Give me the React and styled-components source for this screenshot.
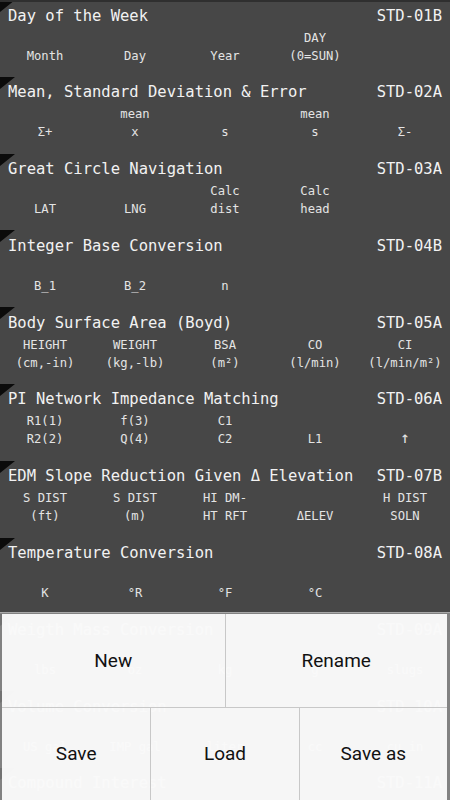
import React from 'react';
import styled, { createGlobalStyle } from 'styled-components';

const GlobalStyle = createGlobalStyle`
  html, body {
    margin: 0;
    padding: 0;
    background: #474747;
    overflow: hidden;
  }
`;

const Screen = styled.div`
  position: relative;
  width: 450px;
  height: 800px;
  overflow: hidden;
  background: #474747;
  border-top: 2px solid #2f2f2f;
  box-sizing: border-box;
  font-family: "DejaVu Sans Mono", "Liberation Mono", monospace;
`;

const List = styled.div`
  display: flex;
  flex-direction: column;
  margin-top: -2px;
`;

const Row = styled.div`
  position: relative;
  height: 76.8px;
  flex: none;
  padding-top: 5.5px;
  box-sizing: border-box;
`;

const Corner = styled.div`
  position: absolute;
  left: 0;
  top: 0;
  width: 0;
  height: 0;
  border-top: 12px solid #0b0b0b;
  border-right: 15px solid transparent;
`;

const Header = styled.div`
  display: flex;
  justify-content: space-between;
  padding: 0 8px;
  font-size: 15.5px;
  line-height: 20px;
  color: #f2f2f2;
  white-space: nowrap;
`;

const Fields = styled.div`
  display: grid;
  grid-template-columns: repeat(5, 90px);
  margin-top: 3px;
`;

const Field = styled.div`
  height: 36px;
  display: flex;
  flex-direction: column;
  justify-content: flex-end;
  align-items: center;
  font-size: 12.2px;
  line-height: 18px;
  color: #e4e4e4;
  white-space: nowrap;
`;

const Arrow = styled.span`
  font-size: 16px;
  line-height: 18px;
`;

const Menu = styled.div`
  position: absolute;
  left: 0;
  right: 0;
  bottom: 0;
  height: 188px;
  box-sizing: border-box;
  padding: 1px 3px 0 2px;
  background: rgba(150, 150, 150, 0.75);
  border-top: 1px solid #a8a8a8;
  display: flex;
  flex-direction: column;
`;

const MenuRow = styled.div`
  flex: 1;
  display: grid;
  grid-template-columns: repeat(${(p) => p.$cols}, 1fr);
  border-bottom: ${(p) => (p.$last ? 'none' : '1px solid #c8c8c8')};
`;

const MenuItem = styled.div`
  display: flex;
  align-items: center;
  justify-content: center;
  background: rgba(255, 255, 255, 0.93);
  border-left: ${(p) => (p.$first ? 'none' : '1px solid #c8c8c8')};
  font-family: Roboto, "Open Sans", sans-serif;
  font-size: 19px;
  color: #111;
`;

const rows = [
  { title: 'Day of the Week', code: 'STD-01B', cols: [['', 'Month'], ['', 'Day'], ['', 'Year'], ['DAY', '(0=SUN)'], ['', '']] },
  { title: 'Mean, Standard Deviation & Error', code: 'STD-02A', cols: [['', 'Σ+'], ['mean', 'x'], ['', 's'], ['mean', 's'], ['', 'Σ-']] },
  { title: 'Great Circle Navigation', code: 'STD-03A', cols: [['', 'LAT'], ['', 'LNG'], ['Calc', 'dist'], ['Calc', 'head'], ['', '']] },
  { title: 'Integer Base Conversion', code: 'STD-04B', cols: [['', 'B_1'], ['', 'B_2'], ['', 'n'], ['', ''], ['', '']] },
  { title: 'Body Surface Area (Boyd)', code: 'STD-05A', cols: [['HEIGHT', '(cm,-in)'], ['WEIGHT', '(kg,-lb)'], ['BSA', '(m²)'], ['CO', '(l/min)'], ['CI', '(l/min/m²)']] },
  { title: 'PI Network Impedance Matching', code: 'STD-06A', cols: [['R1(1)', 'R2(2)'], ['f(3)', 'Q(4)'], ['C1', 'C2'], ['', 'L1'], ['', <Arrow>↑</Arrow>]] },
  { title: 'EDM Slope Reduction Given Δ Elevation', code: 'STD-07B', cols: [['S DIST', '(ft)'], ['S DIST', '(m)'], ['HI DM-', 'HT RFT'], ['', 'ΔELEV'], ['H DIST', 'SOLN']] },
  { title: 'Temperature Conversion', code: 'STD-08A', cols: [['', 'K'], ['', '°R'], ['', '°F'], ['', '°C'], ['', '']] },
  { title: 'Weigth Mass Conversion', code: 'STD-09A', cols: [['', 'lbs'], ['', 'oz'], ['', 'kg'], ['', 'g'], ['', 'slugs']] },
  { title: 'Volume Conversion', code: 'STD-10A', cols: [['', 'US gal'], ['', 'IMP gal'], ['', 'liter'], ['', 'cc'], ['', 'cu in']] },
  { title: 'Compound Interest', code: 'STD-11A', cols: [] },
];

const App = () => {
  return (
    <Screen>
      <GlobalStyle />
      <List>
        {rows.map((row) => (
          <Row key={row.code}>
            <Corner />
            <Header>
              <span>{row.title}</span>
              <span>{row.code}</span>
            </Header>
            <Fields>
              {row.cols.map((c, i) => (
                <Field key={i}>
                  {c[0] && <div>{c[0]}</div>}
                  <div>{c[1] || '\u00a0'}</div>
                </Field>
              ))}
            </Fields>
          </Row>
        ))}
      </List>
      <Menu>
        <MenuRow $cols={2}>
          <MenuItem $first>New</MenuItem>
          <MenuItem>Rename</MenuItem>
        </MenuRow>
        <MenuRow $cols={3} $last>
          <MenuItem $first>Save</MenuItem>
          <MenuItem>Load</MenuItem>
          <MenuItem>Save as</MenuItem>
        </MenuRow>
      </Menu>
    </Screen>
  );
};

export default App;
